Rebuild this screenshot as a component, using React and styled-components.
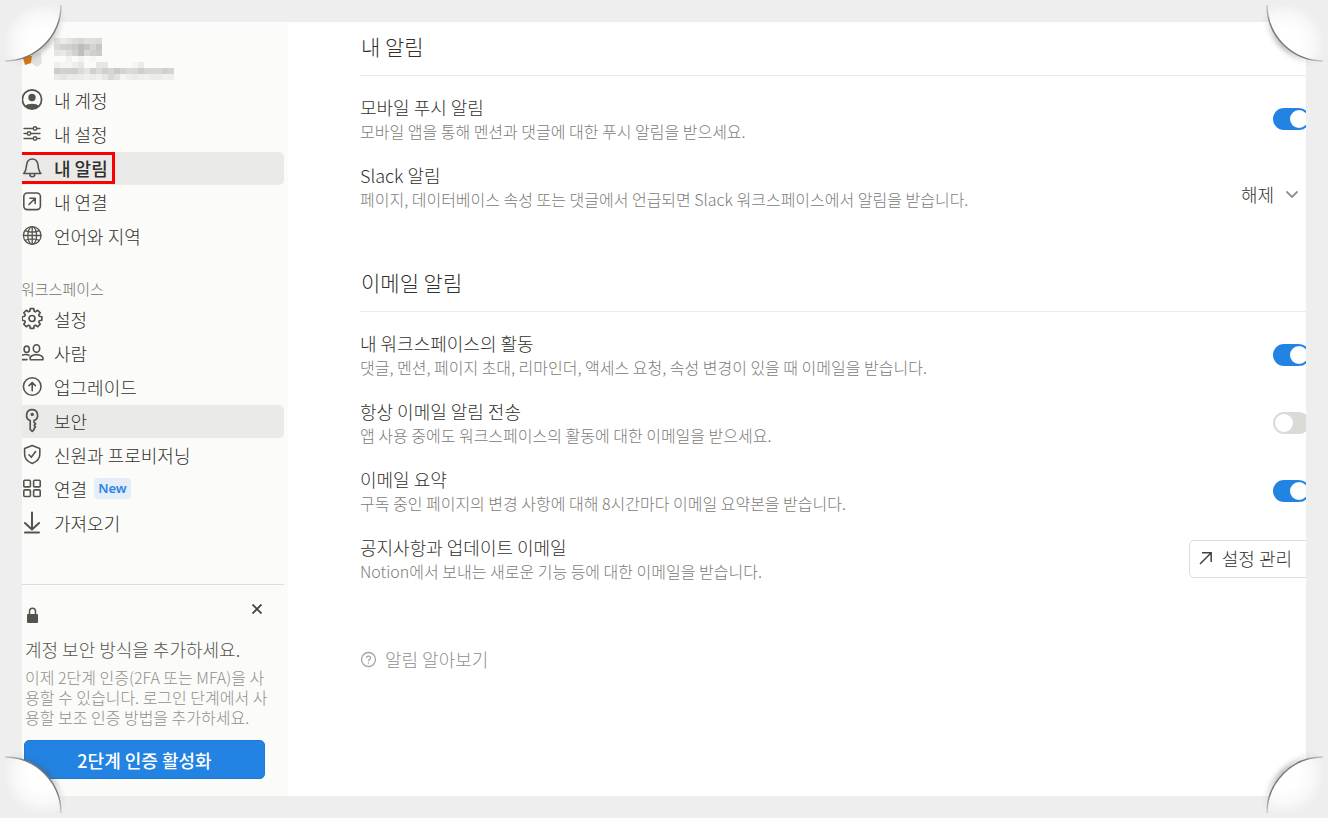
import React from 'react';
import styled, { createGlobalStyle, css } from 'styled-components';

const GlobalStyle = createGlobalStyle`
  *, *::before, *::after { box-sizing: border-box; }
  html, body, #root { height: 100%; }
  body {
    margin: 0;
    background: #eeeeee;
    color: #32302c;
    font: 300 18px/24px "Noto Sans CJK KR", "Noto Sans", sans-serif;
  }
  h2, h3, p, ul { margin: 0; padding: 0; font-weight: inherit; font-size: inherit; }
  ul { list-style: none; }
  button, select { font: inherit; color: inherit; }
`;

const Backdrop = styled.div`
  position: relative;
  display: flex;
  min-height: 100%;
  padding: 22px;
  overflow: hidden;
`;

const Window = styled.div`
  display: flex;
  flex: 1;
  min-width: 0;
  background: #fff;
  overflow: hidden;
`;

const Sidebar = styled.aside`
  display: flex;
  flex-direction: column;
  flex: 0 0 266px;
  padding: 14px 4px 16px 0;
  background: #fbfbf9;
`;

const Profile = styled.div`
  height: 48px;
  svg { display: block; }
`;

const NavList = styled.ul`
  display: flex;
  flex-direction: column;
  gap: 1px;
`;

const NavLink = styled.a`
  position: relative;
  display: flex;
  align-items: center;
  gap: 11px;
  height: 33px;
  padding-bottom: 2px;
  border-radius: 0 5px 5px 0;
  color: inherit;
  text-decoration: none;
  background: ${(p) => (p.$filled ? '#eaeae8' : 'transparent')};
  font-weight: ${(p) => (p.$strong ? 500 : 300)};
  svg { flex: none; }
`;

const Marker = styled.span`
  position: absolute;
  inset: 0 auto 1px -3px;
  width: 96px;
  border: 3px solid #fe0000;
`;

const NewBadge = styled.span`
  margin-left: -4px;
  padding: 0 4px;
  border-radius: 4px;
  background: #e5edf9;
  color: #2a86e2;
  font: 600 13px/21px "Noto Sans", sans-serif;
`;

const GroupTitle = styled.h3`
  margin: 25px 0 3px -1px;
  color: #73716d;
  font-size: 15px;
  line-height: 22px;
`;

const Promo = styled.section`
  margin-top: 44px;
  padding: 16px 19px 0 2px;
  border-top: 1px solid #dddddb;
`;

const PromoTop = styled.div`
  display: flex;
  justify-content: space-between;
  height: 36px;
`;

const CloseButton = styled.button`
  display: flex;
  align-items: center;
  justify-content: center;
  width: 16px;
  height: 16px;
  padding: 0;
  border: 0;
  background: none;
`;

const PromoTitle = styled.h3`
  padding-left: 1px;
  color: #55534e;
`;

const PromoText = styled.p`
  margin: 6px -6px 13px 0;
  padding-left: 1px;
  color: #91908c;
  font-size: 16px;
  line-height: 20px;
`;

const PrimaryButton = styled.button`
  display: block;
  width: 100%;
  height: 39px;
  border: 1px solid #1d7ad6;
  border-radius: 5px;
  background: #2383e2;
  color: #fff;
  font-weight: 500;
`;

const Content = styled.main`
  flex: 1;
  min-width: 0;
  padding: 8px 0 0 72px;
`;

const SectionTitle = styled.h2`
  height: 46px;
  padding: 4px 1px 0;
  border-bottom: 1px solid #ebebea;
  font-size: 21px;
  line-height: 24px;
`;

const Section = styled.section`
  & + & { margin-top: 55px; }
`;

const Settings = styled.div`
  display: flex;
  flex-direction: column;
  gap: 20px;
  padding-top: 19px;
`;

const Setting = styled.div`
  display: flex;
  align-items: center;
  justify-content: space-between;
  height: 48px;
`;

const SettingName = styled.label`
  display: block;
  line-height: 24px;
`;

const SettingNote = styled.p`
  color: #7d7b77;
  font-size: 16px;
  line-height: 24px;
`;

const Toggle = styled.input`
  appearance: none;
  flex: none;
  display: flex;
  align-items: center;
  width: 37px;
  height: 22px;
  margin: 0 -4px 0 0;
  padding: 0 2px;
  border-radius: 11px;
  background: #dadad7;
  &::before {
    content: '';
    width: 18px;
    height: 18px;
    border-radius: 50%;
    background: #fff;
  }
  &:checked { background: #2383e2; justify-content: flex-end; }
`;

const SelectBox = styled.div`
  display: flex;
  align-items: center;
  gap: 10px;
  padding: 14px 7px 0 0;
  svg { pointer-events: none; }
`;

const Select = styled.select`
  appearance: none;
  padding: 0;
  border: 0;
  background: none;
`;

const ManageButton = styled.button`
  display: flex;
  flex: none;
  align-items: center;
  gap: 8px;
  height: 38px;
  margin-right: -4px;
  padding: 0 17px 2px 8px;
  border: 1px solid #dcdcda;
  border-radius: 5px;
  background: #fff;
`;

const HelpLink = styled.a`
  display: inline-flex;
  align-items: center;
  gap: 8px;
  margin-top: 64px;
  color: #91908c;
  text-decoration: none;
`;

const corner = {
  tl: css`top: 0; left: 0;`,
  tr: css`top: 0; right: 0; transform: scaleX(-1);`,
  bl: css`bottom: 0; left: 0; transform: scaleY(-1);`,
  br: css`bottom: 0; right: 0; transform: scale(-1);`,
};

const CurlSvg = styled.svg`
  position: absolute;
  pointer-events: none;
  ${(p) => corner[p.$at]}
`;

function Curl({ at }) {
  const id = (name) => `${name}-${at}`;
  return (
    <CurlSvg $at={at} width="76" height="76" viewBox="0 0 76 76" aria-hidden="true">
      <defs>
        <radialGradient id={id('paper')} gradientUnits="userSpaceOnUse" cx="44" cy="44" r="46">
          <stop offset="0" stopColor="#ffffff" />
          <stop offset="0.35" stopColor="#fefefe" />
          <stop offset="0.65" stopColor="#f8f8f8" />
          <stop offset="0.88" stopColor="#eeeeee" />
        </radialGradient>
        <linearGradient id={id('edge')} gradientUnits="userSpaceOnUse" x1="5" y1="61" x2="61" y2="5">
          <stop offset="0" stopColor="#777" stopOpacity="0.3" />
          <stop offset="0.2" stopColor="#777" />
          <stop offset="0.8" stopColor="#777" />
          <stop offset="1" stopColor="#777" stopOpacity="0.3" />
        </linearGradient>
        <linearGradient id={id('shade')} gradientUnits="userSpaceOnUse" x1="5" y1="61" x2="61" y2="5">
          <stop offset="0.05" stopColor="#555" stopOpacity="0" />
          <stop offset="0.5" stopColor="#555" stopOpacity="0.4" />
          <stop offset="0.95" stopColor="#555" stopOpacity="0" />
        </linearGradient>
        <filter id={id('soft')} x="-20%" y="-20%" width="140%" height="140%">
          <feGaussianBlur stdDeviation="2" />
        </filter>
      </defs>
      <path d="M6 62A57 57 0 0 0 62 6" fill="none" stroke={`url(#${id('shade')})`} strokeWidth="6" filter={`url(#${id('soft')})`} />
      <path d="M0 0H61V5A56 56 0 0 1 5 61H0Z" fill="#eeeeee" />
      <path d="M5 5H61A56 56 0 0 1 5 61Z" fill={`url(#${id('paper')})`} />
      <path d="M5 61A56 56 0 0 0 61 5" fill="none" stroke={`url(#${id('edge')})`} strokeWidth="1.4" />
    </CurlSvg>
  );
}

const Icon = ({ children, size = 21, w = 1.6 }) => (
  <svg width={size} height={size} viewBox="0 0 21 21" fill="none" stroke="#55534e" strokeWidth={w} strokeLinecap="round" strokeLinejoin="round" overflow="visible" aria-hidden="true">
    {children}
  </svg>
);

const gearPath = (() => {
  const points = [];
  for (let i = 0; i < 8; i += 1) {
    [[-17, 7.6], [-10, 10], [10, 10], [17, 7.6]].forEach(([d, r]) => {
      const a = ((i * 45 + d) * Math.PI) / 180;
      points.push(`${(10 + r * Math.sin(a)).toFixed(2)} ${(10.5 - r * Math.cos(a)).toFixed(2)}`);
    });
  }
  return `M${points.join('L')}Z`;
})();

const icons = {
  account: (
    <Icon w={1.7}>
      <circle cx="10" cy="10.5" r="9.6" />
      <circle cx="10" cy="8.5" r="3.7" fill="#55534e" stroke="none" />
      <path d="M3 17C5.500 14 14.500 14 17 17C13 21 7 21 3 17Z" fill="#55534e" stroke="none" />
    </Icon>
  ),
  sliders: (
    <Icon w={1.4}>
      <path d="M2 5.500H11.200M14.800 5.500H18M2 10.500H5.200M8.800 10.500H18M2 15.500H11.200M14.800 15.500H18" />
      <circle cx="13" cy="5.500" r="1.700" />
      <circle cx="7" cy="10.500" r="1.700" />
      <circle cx="13" cy="15.500" r="1.700" />
    </Icon>
  ),
  bell: (
    <Icon>
      <path d="M1.700 16.500C3.600 14.600 4.200 12 4.600 8C5 4.600 7 2 10.300 2C13.600 2 15.600 4.600 16 8C16.400 12 17 14.600 18.900 16.500ZM7.800 17C7.800 20.600 12.800 20.600 12.800 17" />
    </Icon>
  ),
  link: (
    <Icon>
      <rect x="1.800" y="2" width="16.600" height="16.600" rx="3.500" />
      <path d="M7 13.500L13 7.500M8 7.300H13.200V12.500" />
    </Icon>
  ),
  globe: (
    <Icon w={1.3}>
      <circle cx="10.200" cy="10.500" r="8.800" />
      <ellipse cx="10.200" cy="10.500" rx="4.400" ry="8.800" />
      <path d="M1.400 10.500H19M10.200 1.700V19.300M3.200 5.600C7 7.600 13.400 7.600 17.200 5.600M3.200 15.400C7 13.400 13.400 13.400 17.200 15.400" />
    </Icon>
  ),
  gear: (
    <Icon w={1.7}>
      <path d={gearPath} />
      <circle cx="10" cy="10.500" r="3" />
    </Icon>
  ),
  people: (
    <Icon>
      <ellipse cx="14.500" cy="6.500" rx="3.200" ry="3.700" />
      <path d="M8.500 17.800C6.500 14.500 11 12.600 14.500 12.600C18 12.600 22 14.500 20.800 17.800Z" />
      <ellipse cx="4.700" cy="7.300" rx="2.600" ry="3.200" />
      <path d="M0 13.300C2 12.400 5 12.300 7 13.300M0 17.600H5" />
    </Icon>
  ),
  up: (
    <Icon>
      <circle cx="10.200" cy="10.500" r="8.800" />
      <path d="M10.200 14.700V6.700M7 9.600L10.200 6.500L13.400 9.600" />
    </Icon>
  ),
  key: (
    <Icon w={1.7}>
      <path d="M8.200 10.600C2.700 8.800 3.600 -0.400 10.100 -0.400C16.600 -0.400 17.500 8.800 12 10.600V12.200L13.600 13.900L12.200 15.400L13.500 17L12.200 18.400V19.400L10.200 21.300L8.200 19.400Z" />
      <circle cx="10.200" cy="4.400" r="1.700" fill="#55534e" stroke="none" />
    </Icon>
  ),
  shield: (
    <Icon>
      <path d="M10.200 1.500L17.800 4.500V10.500C17.800 14.500 15 17.500 10.200 19.500C5.400 17.500 2.600 14.500 2.600 10.500V4.500Z" />
      <path d="M7 10.800L9.300 13.300L13.600 7.500" />
    </Icon>
  ),
  grid: (
    <Icon>
      <rect x="1.800" y="2.300" width="6.600" height="6.600" rx="1" />
      <rect x="11.600" y="2.300" width="6.600" height="6.600" rx="1" />
      <rect x="1.800" y="11.900" width="6.600" height="6.600" rx="1" />
      <rect x="11.600" y="11.900" width="6.600" height="6.600" rx="1" />
    </Icon>
  ),
  download: (
    <Icon w={2}>
      <path d="M10 0.500V17M3 11L10 17.500L17 11M3 20.500H17" />
    </Icon>
  ),
};

const accountNav = [
  ['account', '내 계정'],
  ['sliders', '내 설정'],
  ['bell', '내 알림', { current: true }],
  ['link', '내 연결'],
  ['globe', '언어와 지역'],
];

const workspaceNav = [
  ['gear', '설정'],
  ['people', '사람'],
  ['up', '업그레이드'],
  ['key', '보안', { hovered: true }],
  ['shield', '신원과 프로비저닝'],
  ['grid', '연결', { isNew: true }],
  ['download', '가져오기'],
];

function Nav({ items }) {
  return (
    <NavList>
      {items.map(([icon, text, state = {}]) => (
        <li key={text}>
          <NavLink href="#" $filled={state.current || state.hovered} $strong={state.current}>
            {icons[icon]}
            {text}
            {state.isNew && <NewBadge>New</NewBadge>}
            {state.current && <Marker />}
          </NavLink>
        </li>
      ))}
    </NavList>
  );
}

const mosaic = [
  { y: 2, cells: ['e2e2e0', 'ebebe9', 'e4e4e2', 'dcdcda', 'd6d6d4', 'e0e0de', 'dededc', 'dadad8'] },
  { y: 8, cells: ['dbdbd9', 'd2d2d0', 'd0d0ce', 'cacac8', 'bdbdbb', 'c6c6c4', 'd4d4d2', 'c6c6c4'] },
  { y: 14, cells: ['e6e6e4', 'e9e9e7', 'dededc', 'd2d2d0', 'bfbfbd', 'd8d8d6', 'cfcfcd', 'cbcbc9'] },
  { y: 20, cells: ['fbfbf9', 'fbfbf9', 'f2f2f0', 'fbfbf9', 'f3f3f1', 'fbfbf9', 'f6f6f4', 'fbfbf9'] },
  { y: 26, cells: ['f0f0ee', 'f5f5f3', 'f5f5f3', 'eeeeec', 'e6e6e4', 'fbfbf9', 'fbfbf9', 'e6e6e4', 'e6e6e4', 'fbfbf9', 'fbfbf9', 'fbfbf9', 'fbfbf9', 'f6f6f4', 'ebebe9'] },
  { y: 32, cells: ['cbcbc9', 'd2d2d0', 'd0d0ce', 'cececc', 'dbdbd9', 'e4e4e2', 'd0d0ce', 'dbdbd9', 'cfcfcd', 'd6d6d4', 'cbcbc9', 'd4d4d2', 'dadad8', 'd8d8d6', 'cececc', 'd6d6d4', 'd8d8d6', 'd8d8d6', 'cfcfcd', 'd4d4d2'] },
  { y: 38, cells: ['eaeae8', 'e4e4e2', 'ebebe9', 'e9e9e7', 'ebebe9', 'efefed', 'ebebe9', 'f0f0ee', 'e6e6e4', 'd8d8d6', 'e2e2e0', 'f5f5f3', 'efefed', 'ebebe9', 'eeeeec', 'f0f0ee', 'ebebe9', 'ebebe9', 'f0f0ee', 'eeeeec'] },
];

function ProfileMosaic() {
  return (
    <svg width="160" height="48" role="img" aria-label="프로필">
      <path d="M10 18L19 17L20 27L15 31L9 27Z" fill="#e1e1df" />
      <path d="M1 22L3 20L10 20L9 27L3 29Z" fill="#d9790f" />
      {mosaic.map(({ y, cells }) =>
        cells.map((c, i) => <rect key={`${y}-${i}`} x={32 + i * 6} y={y} width="6" height="6" fill={`#${c}`} />)
      )}
    </svg>
  );
}

function SettingRow({ id, name, note, children }) {
  return (
    <Setting>
      <div>
        <SettingName htmlFor={id}>{name}</SettingName>
        <SettingNote>{note}</SettingNote>
      </div>
      {children}
    </Setting>
  );
}

export default function App() {
  return (
    <>
      <GlobalStyle />
      <Backdrop>
        <Window>
          <Sidebar>
            <Profile><ProfileMosaic /></Profile>
            <Nav items={accountNav} />
            <GroupTitle>워크스페이스</GroupTitle>
            <Nav items={workspaceNav} />
            <Promo>
              <PromoTop>
                <svg width="16" height="28" viewBox="0 0 16 28" aria-hidden="true">
                  <rect x="3" y="13" width="11" height="9" rx="1" fill="#55534e" />
                  <path d="M5.500 13V10.500C5.500 6 11.500 6 11.500 10.500V13" fill="none" stroke="#55534e" strokeWidth="1.500" />
                </svg>
                <CloseButton aria-label="닫기">
                  <svg width="10" height="10" viewBox="0 0 10 10" stroke="#44423e" strokeWidth="1.800"><path d="M0.500 0.500L9.500 9.500M9.500 0.500L0.500 9.500" /></svg>
                </CloseButton>
              </PromoTop>
              <PromoTitle>계정 보안 방식을 추가하세요.</PromoTitle>
              <PromoText>이제 2단계 인증(2FA 또는 MFA)을 사용할 수 있습니다. 로그인 단계에서 사용할 보조 인증 방법을 추가하세요.</PromoText>
              <PrimaryButton>2단계 인증 활성화</PrimaryButton>
            </Promo>
          </Sidebar>
          <Content>
            <Section>
              <SectionTitle>내 알림</SectionTitle>
              <Settings>
                <SettingRow id="push" name="모바일 푸시 알림" note="모바일 앱을 통해 멘션과 댓글에 대한 푸시 알림을 받으세요.">
                  <Toggle id="push" type="checkbox" defaultChecked />
                </SettingRow>
                <SettingRow id="slack" name="Slack 알림" note="페이지, 데이터베이스 속성 또는 댓글에서 언급되면 Slack 워크스페이스에서 알림을 받습니다.">
                  <SelectBox>
                    <Select id="slack"><option>해제</option></Select>
                    <svg width="14" height="9" viewBox="0 0 14 9" fill="none" stroke="#91908c" strokeWidth="1.800"><path d="M1.500 1.500L7 7L12.500 1.500" /></svg>
                  </SelectBox>
                </SettingRow>
              </Settings>
            </Section>
            <Section>
              <SectionTitle>이메일 알림</SectionTitle>
              <Settings>
                <SettingRow id="activity" name="내 워크스페이스의 활동" note="댓글, 멘션, 페이지 초대, 리마인더, 액세스 요청, 속성 변경이 있을 때 이메일을 받습니다.">
                  <Toggle id="activity" type="checkbox" defaultChecked />
                </SettingRow>
                <SettingRow id="always" name="항상 이메일 알림 전송" note="앱 사용 중에도 워크스페이스의 활동에 대한 이메일을 받으세요.">
                  <Toggle id="always" type="checkbox" />
                </SettingRow>
                <SettingRow id="digest" name="이메일 요약" note="구독 중인 페이지의 변경 사항에 대해 8시간마다 이메일 요약본을 받습니다.">
                  <Toggle id="digest" type="checkbox" defaultChecked />
                </SettingRow>
                <SettingRow id="news" name="공지사항과 업데이트 이메일" note="Notion에서 보내는 새로운 기능 등에 대한 이메일을 받습니다.">
                  <ManageButton id="news">
                    <svg width="16" height="16" viewBox="0 0 16 16" fill="none" stroke="#44423e" strokeWidth="1.500"><path d="M2 14L13 3M4 2.800H13.200V12" /></svg>
                    설정 관리
                  </ManageButton>
                </SettingRow>
              </Settings>
            </Section>
            <HelpLink href="#">
              <svg width="17" height="17" viewBox="0 0 17 17" fill="none" stroke="#a5a4a1" strokeWidth="1.300">
                <circle cx="8.500" cy="8.500" r="7" />
                <path d="M6.400 7C6.400 4.400 10.600 4.400 10.600 7C10.600 8.400 8.500 8.400 8.500 10M8.500 11.200V12.500" />
              </svg>
              알림 알아보기
            </HelpLink>
          </Content>
        </Window>
        <Curl at="tl" />
        <Curl at="tr" />
        <Curl at="bl" />
        <Curl at="br" />
      </Backdrop>
    </>
  );
}
